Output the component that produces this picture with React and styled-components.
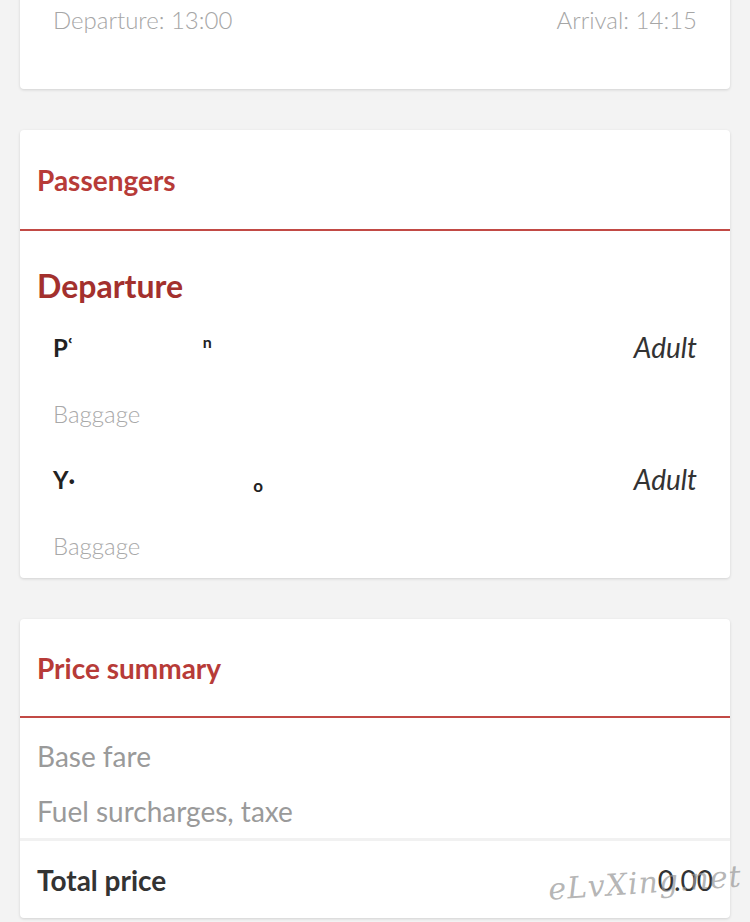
import React from 'react';
import styled, { createGlobalStyle } from 'styled-components';

const GlobalStyle = createGlobalStyle`
  html, body {
    margin: 0;
    padding: 0;
    background: #f3f3f3;
    font-family: Lato, "Open Sans", sans-serif;
    overflow: hidden;
  }
`;

const Page = styled.div`
  position: relative;
  width: 750px;
  height: 922px;
  padding: 0 20px;
  box-sizing: border-box;
  display: flex;
  flex-direction: column;
  gap: 41px;
`;

const Card = styled.section`
  background: #fff;
  border-radius: 4px;
  box-shadow: 0 1px 3px rgba(0, 0, 0, 0.14);
  display: flex;
  flex-direction: column;
`;

const TimesCard = styled(Card)`
  margin-top: -20px;
  height: 109px;
  padding: 0 33px;
`;

const TimesRow = styled.div`
  display: flex;
  justify-content: space-between;
  align-items: center;
  height: 78px;
  font-size: 24px;
  font-weight: 300;
  color: #a6a6a6;
`;

const CardHeader = styled.div`
  height: ${p => p.$height}px;
  display: flex;
  align-items: center;
  padding: 0 17px;
  border-bottom: 2px solid #c24a45;
  font-size: 28px;
  font-weight: 700;
  color: #b73b38;
`;

const SectionTitle = styled.h2`
  margin: 34px 0 0;
  height: 40px;
  padding: 0 17px;
  display: flex;
  align-items: center;
  font-size: 32px;
  font-weight: 700;
  color: #a3302d;
`;

const PassengerList = styled.div`
  display: flex;
  flex-direction: column;
  padding: 9px 33px 0;
`;

const Line = styled.div`
  height: 66px;
  display: flex;
  align-items: center;
  justify-content: space-between;
`;

const Name = styled.div`
  display: flex;
  align-items: center;
  font-size: 24px;
  font-weight: 700;
  color: #222;
  height: 28px;
`;

const Fragment = styled.span`
  margin-left: ${p => p.$offset || 0}px;
  font-size: ${p => p.$size || 24}px;
  transform: translateY(${p => p.$shift || 0}px);
`;

const Type = styled.span`
  font-size: 28px;
  font-style: italic;
  color: #333;
`;

const Muted = styled.span`
  font-size: 24px;
  font-weight: 300;
  color: #a8a8a8;
`;

const PriceList = styled.div`
  display: flex;
  flex-direction: column;
  padding: 10px 17px 0;
`;

const PriceLine = styled.div`
  height: 55px;
  display: flex;
  align-items: center;
  font-size: 28px;
  color: #9a9a9a;
`;

const TotalRow = styled.div`
  position: relative;
  border-top: 3px solid #f1f1f1;
  height: 77px;
  display: flex;
  align-items: center;
  justify-content: space-between;
  padding: 0 17px;
  font-size: 28px;
  font-weight: 700;
  color: #333;
`;

const Amount = styled.span`
  font-weight: 400;
`;

const Watermark = styled.span`
  position: absolute;
  right: -12px;
  top: 24px;
  font-family: "DejaVu Serif", serif;
  font-style: italic;
  font-weight: 400;
  font-size: 30px;
  color: rgba(150, 150, 150, 0.7);
  letter-spacing: 1px;
  transform: rotate(-4deg);
  pointer-events: none;
`;

const passengers = [
  { parts: [{ t: 'P\u02bf' }, { t: 'n', offset: 130, size: 16, shift: -6 }] },
  { parts: [{ t: 'Y\u00b7' }, { t: 'o', offset: 178, size: 17, shift: 6 }] },
];

export default function App() {
  return (
    <>
      <GlobalStyle />
      <Page>
        <TimesCard>
          <TimesRow>
            <span>Departure: 13:00</span>
            <span>Arrival: 14:15</span>
          </TimesRow>
        </TimesCard>

        <Card>
          <CardHeader $height={99}>Passengers</CardHeader>
          <SectionTitle>Departure</SectionTitle>
          <PassengerList>
            {passengers.map((p, i) => (
              <React.Fragment key={i}>
                <Line>
                  <Name>
                    {p.parts.map((f, j) => (
                      <Fragment key={j} $offset={f.offset} $size={f.size} $shift={f.shift}>
                        {f.t}
                      </Fragment>
                    ))}
                  </Name>
                  <Type>Adult</Type>
                </Line>
                <Line>
                  <Muted>Baggage</Muted>
                </Line>
              </React.Fragment>
            ))}
          </PassengerList>
        </Card>

        <Card>
          <CardHeader $height={97}>Price summary</CardHeader>
          <PriceList>
            <PriceLine>Base fare</PriceLine>
            <PriceLine>Fuel surcharges, taxe</PriceLine>
          </PriceList>
          <TotalRow>
            <span>Total price</span>
            <Amount>0.00</Amount>
            <Watermark>eLvXing.net</Watermark>
          </TotalRow>
        </Card>
      </Page>
    </>
  );
}
